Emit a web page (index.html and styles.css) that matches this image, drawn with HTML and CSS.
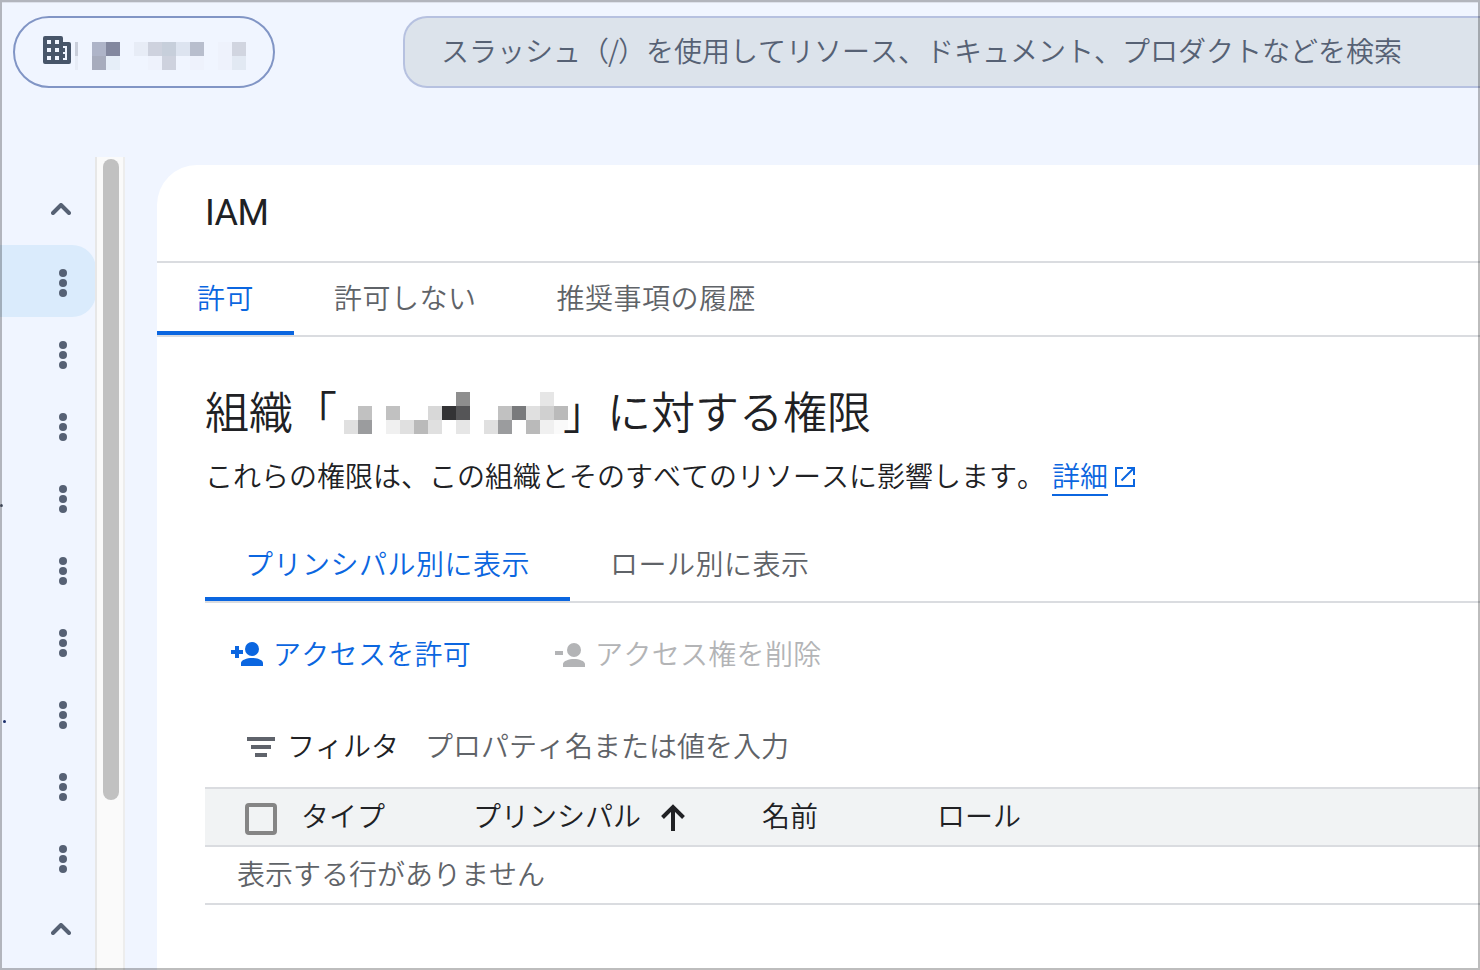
FILE: index.html
```html
<!DOCTYPE html>
<html lang="ja">
<head>
<meta charset="UTF-8">
<meta name="viewport" content="width=device-width, initial-scale=1.0">
<title>IAM</title>
<link rel="stylesheet" href="styles.css">
</head>
<body>
<header class="topbar">
    <div class="project-picker">
        <svg class="icon-org" width="28" height="28" viewBox="0 0 28 28">
            <path fill="#475569" fill-rule="evenodd" d="M2 0h16a2 2 0 0 1 2 2v4h6a2 2 0 0 1 2 2v18a2 2 0 0 1-2 2H2a2 2 0 0 1-2-2V2a2 2 0 0 1 2-2zM4 4v4h4V4zM12 4v4h4V4zM4 12v4h4v-4zM12 12v4h4v-4zM4 20v4h4v-4zM12 20v4h4v-4zM20 10v14h4V10z"/>
            <path fill="#475569" d="M20 12h2v4h-2zM20 18h2v4h-2z"/>
        </svg>
        <svg class="org-name" width="171" height="28" viewBox="75 42 171 28" shape-rendering="crispEdges">
            <path fill="#c9ceda" d="M75 42h3v14h-3z"/>
            <path fill="#e7ecf6" d="M75 56h3v14h-3zM134 42h14v14h-14z"/>
            <path fill="#aeb4c8" d="M92 42h14v14h-14z"/>
            <path fill="#83889f" d="M106 42h14v14h-14z"/>
            <path fill="#a7acbd" d="M92 56h14v14h-14z"/>
            <path fill="#e6eef8" d="M106 56h14v14h-14z"/>
            <path fill="#ced2de" d="M148 42h14v14h-14zM162 56h14v14h-14z"/>
            <path fill="#c7cfdb" d="M162 42h14v14h-14z"/>
            <path fill="#dde4f0" d="M176 42h14v14h-14z"/>
            <path fill="#b8becd" d="M190 42h14v14h-14z"/>
            <path fill="#eef2fc" d="M148 56h14v14h-14zM190 56h14v14h-14zM218 42h14v28h-14z"/>
            <path fill="#d1d5e0" d="M232 42h14v14h-14z"/>
            <path fill="#e2e9f3" d="M232 56h14v14h-14z"/>
        </svg>
    </div>
    <div class="search">スラッシュ（<span class="slash">/</span>）を使用してリソース、ドキュメント、プロダクトなどを検索</div>
</header>

<div class="main">
    <nav class="sidebar">
        <div class="nav-row"><svg class="chevron" width="20" height="12" viewBox="0 0 20 12"><path d="M2 10l8-8 8 8"/></svg></div>
        <div class="nav-row active"><span class="dots"><i></i><i></i><i></i></span></div>
        <div class="nav-row"><span class="dots"><i></i><i></i><i></i></span></div>
        <div class="nav-row"><span class="dots"><i></i><i></i><i></i></span></div>
        <div class="nav-row"><span class="tail tail-long"></span><span class="dots"><i></i><i></i><i></i></span></div>
        <div class="nav-row"><span class="dots"><i></i><i></i><i></i></span></div>
        <div class="nav-row"><span class="dots"><i></i><i></i><i></i></span></div>
        <div class="nav-row"><span class="tail tail-dot"></span><span class="dots"><i></i><i></i><i></i></span></div>
        <div class="nav-row"><span class="dots"><i></i><i></i><i></i></span></div>
        <div class="nav-row"><span class="dots"><i></i><i></i><i></i></span></div>
        <div class="nav-row"><svg class="chevron" width="20" height="12" viewBox="0 0 20 12"><path d="M2 10l8-8 8 8"/></svg></div>
    </nav>
    <div class="scrollbar"><div class="thumb"></div></div>

    <main class="content">
        <h1>IAM</h1>
        <div class="tabs">
            <a class="tab selected">許可</a>
            <a class="tab">許可しない</a>
            <a class="tab">推奨事項の履歴</a>
        </div>

        <div class="panel">
            <h2>
                <span>組織「</span>
                <svg class="org-title" width="224" height="42" viewBox="0 0 16 3" shape-rendering="crispEdges">
                    <path fill="#8e8e8e" d="M8 0h1v1h-1z"/>
                    <path fill="#e6e6e6" d="M14 0h1v1h-1zM8 2h1v1h-1z"/>
                    <path fill="#c1c1c1" d="M1 1h1v1h-1zM3 1h1v1h-1zM11 1h1v1h-1z"/>
                    <path fill="#d8d8d8" d="M6 1h1v1h-1z"/>
                    <path fill="#333335" d="M7 1h1v1h-1z"/>
                    <path fill="#555557" d="M8 1h1v1h-1z"/>
                    <path fill="#797a7c" d="M12 1h1v1h-1z"/>
                    <path fill="#e0e0e0" d="M13 1h1v1h-1zM0 2h1v1h-1zM4 2h1v1h-1zM6 2h1v1h-1zM10 2h1v1h-1z"/>
                    <path fill="#d0d0d0" d="M14 1h1v1h-1z"/>
                    <path fill="#bababa" d="M15 1h1v1h-1zM5 2h1v1h-1zM13 2h1v1h-1z"/>
                    <path fill="#9b9c9e" d="M1 2h1v1h-1zM11 2h1v1h-1z"/>
                    <path fill="#f0f0f0" d="M3 2h1v1h-1zM14 2h1v1h-1z"/>
                    <path fill="#fafafa" d="M15 2h1v1h-1z"/>
                </svg>
                <span class="after-name">」に対する権限</span>
            </h2>
            <p class="desc">
                <span>これらの権限は、この組織とそのすべてのリソースに影響します。</span>
                <a class="link">詳細</a>
                <svg width="20" height="20" viewBox="0 0 20 20" fill="none" stroke="#0b66e0" stroke-width="2"><path d="M8 1H1v18h18v-7M12 1h7v7M18.500 1.500L6.500 13.500"/></svg>
            </p>

            <div class="tabs subtabs">
                <a class="tab selected">プリンシパル別に表示</a>
                <a class="tab">ロール別に表示</a>
            </div>

            <div class="toolbar">
                <a class="action">
                    <svg width="32" height="24" viewBox="0 0 32 24" fill="#0b66e0"><circle cx="21" cy="7" r="7"/><path d="M4 4h4v4h4v4H8v4H4v-4H0V8h4zM10 24v-3c0-3 6-5 11-5s11 2 11 5v3z"/></svg>
                    <span>アクセスを許可</span>
                </a>
                <a class="action disabled">
                    <svg width="30" height="24" viewBox="0 0 30 24" fill="#b3b4b6"><circle cx="19" cy="7" r="7"/><path d="M0 8h8v4H0zM8 24v-3c0-3 6-5 11-5s11 2 11 5v3z"/></svg>
                    <span>アクセス権を削除</span>
                </a>
            </div>

            <div class="filter">
                <svg width="28" height="20" viewBox="0 0 28 20" fill="#5f636b"><path d="M0 0h28v4H0zM4 8h20v4H4zM8 16h12v4H8z"/></svg>
                <span class="filter-label">フィルタ</span>
                <span class="filter-hint">プロパティ名または値を入力</span>
            </div>

            <div class="table">
                <div class="table-head">
                    <span class="checkbox"></span>
                    <span class="col-type">タイプ</span>
                    <span class="col-principal">プリンシパル
                        <svg width="24" height="27" viewBox="0 0 24 27" fill="none" stroke="#202124" stroke-width="4"><path d="M12 27V3M1.500 13.500L12 3l10.500 10.500"/></svg>
                    </span>
                    <span class="col-name">名前</span>
                    <span class="col-role">ロール</span>
                </div>
                <div class="table-empty">表示する行がありません</div>
            </div>
        </div>
    </main>
</div>
<div class="frame"></div>
</body>
</html>
```
FILE: styles.css
```css
* {
    box-sizing: border-box;
}
body {
    margin: 0;
    width: 1480px;
    height: 970px;
    overflow: hidden;
    background-color: #f0f5ff;
    color: #202124;
    font-family: "Noto Sans CJK JP", sans-serif;
    font-size: 28px;
    font-weight: 350;
    font-kerning: none;
    line-height: 40px;
    white-space: nowrap;
}
svg {
    display: block;
    flex: none;
}
.frame {
    position: fixed;
    inset: 0;
    border: 2px solid rgba(0, 0, 0, 0.26);
    box-shadow: inset 0 1px 0 rgba(0, 0, 0, 0.08);
    pointer-events: none;
}

/* top bar */
.topbar {
    display: flex;
    height: 157px;
    padding: 16px 0 0 13px;
}
.project-picker {
    display: flex;
    align-items: flex-start;
    flex: none;
    width: 262px;
    height: 72px;
    margin-right: 128px;
    padding: 18px 0 0 28px;
    border: 2px solid #8195c5;
    border-radius: 36px;
}
.org-name {
    margin: 6px 0 0 4px;
}
.search {
    flex: 1;
    height: 72px;
    padding: 12px 0 0 36px;
    border: 2px solid #b6c1e0;
    border-right: 0;
    border-radius: 24px 0 0 24px;
    background-color: #dce3eb;
    color: #566174;
}
.slash {
    margin: 0 -1px;
}

/* side navigation */
.main {
    display: flex;
    height: 813px;
}
.sidebar {
    flex: none;
    width: 95px;
    padding-top: 16px;
}
.nav-row {
    display: flex;
    align-items: center;
    justify-content: flex-end;
    width: 96px;
    height: 72px;
    padding-right: 25px;
}
.nav-row.active {
    background-color: #daebfc;
    border-radius: 0 24px 24px 0;
}
.chevron {
    fill: none;
    stroke: #566174;
    stroke-width: 4;
    stroke-linecap: round;
    stroke-linejoin: round;
}
.dots {
    display: flex;
    flex-direction: column;
    gap: 2px;
    margin: 4px 4px 0 0;
}
.dots i {
    width: 8px;
    height: 8px;
    border-radius: 50%;
    background-color: #566174;
}
.tail {
    height: 3px;
    margin-right: auto;
    border-radius: 2px;
    background-color: #566174;
}
.tail-long {
    width: 3px;
    margin-top: 16px;
}
.tail-dot {
    width: 3px;
    margin: 16px auto 0 3px;
    background-color: #1c2f6b;
}
.scrollbar {
    flex: none;
    width: 30px;
    margin-right: 32px;
    padding: 2px 0 0 6px;
    border-left: 2px solid #e7e7e7;
    border-right: 2px solid #ededed;
    background-color: #fafafa;
}
.thumb {
    width: 16px;
    height: 641px;
    border-radius: 8px;
    background-color: #c1c1c1;
}

/* page */
.content {
    flex: 1;
    min-width: 0;
    margin-top: 8px;
    border-top-left-radius: 40px;
    background-color: #fff;
}
h1 {
    height: 98px;
    margin: 0;
    padding: 28px 0 0 48px;
    border-bottom: 2px solid #dadce0;
    font-family: Roboto, sans-serif;
    font-size: 36px;
    font-weight: 400;
    letter-spacing: -0.4px;
}
.tabs {
    display: flex;
    height: 74px;
    border-bottom: 2px solid #dadce0;
    letter-spacing: 0.5px;
}
.tab {
    height: 72px;
    padding: 14px 40px 0;
    color: #5f6368;
}
.tab.selected {
    color: #0b66e0;
    border-bottom: 4px solid #0b66e0;
}
.panel {
    padding-left: 48px;
}
h2 {
    display: flex;
    height: 60px;
    margin: 43px 0 0;
    font-size: 44px;
    font-weight: 350;
    line-height: 60px;
}
.org-title {
    margin: 12px 0 0 7px;
}
.after-name {
    margin-left: -5px;
}
.desc {
    display: flex;
    height: 40px;
    margin: 15px 0 0;
}
.desc svg {
    margin: 12px 0 0 7px;
}
.link {
    height: 41px;
    margin-left: 7px;
    border-bottom: 2px solid #0b66e0;
    color: #0b66e0;
}
.subtabs {
    margin-top: 34px;
}
.toolbar {
    display: flex;
    margin-top: 30px;
    padding-left: 26px;
    letter-spacing: 0.3px;
}
.action {
    display: flex;
    color: #0b66e0;
    margin-right: 84px;
}
.action svg {
    margin: 9px 10px 0 0;
}
.action.disabled {
    color: #b3b4b6;
}
.action.disabled svg {
    margin-top: 10px;
}
.filter {
    display: flex;
    height: 40px;
    margin-top: 52px;
    padding-left: 42px;
}
.filter svg {
    margin-top: 12px;
}
.filter-label {
    width: 138px;
    margin-left: 12px;
}
.filter-hint {
    color: #5f6368;
}

/* table */
.table {
    margin-top: 22px;
}
.table-head {
    display: flex;
    height: 60px;
    padding: 6px 0 0 40px;
    border-top: 2px solid #dadce0;
    border-bottom: 2px solid #dadce0;
    background-color: #f1f3f4;
}
.checkbox {
    width: 32px;
    height: 32px;
    margin: 8px 24px 0 0;
    border: 4px solid #858585;
    border-radius: 4px;
}
.col-type {
    width: 172px;
}
.col-principal {
    display: flex;
    width: 289px;
}
.col-principal svg {
    margin: 9px 0 0 20px;
}
.col-name {
    width: 175px;
}
.table-empty {
    height: 58px;
    padding: 6px 0 0 32px;
    border-bottom: 2px solid #dadce0;
    color: #5f6368;
}
```
